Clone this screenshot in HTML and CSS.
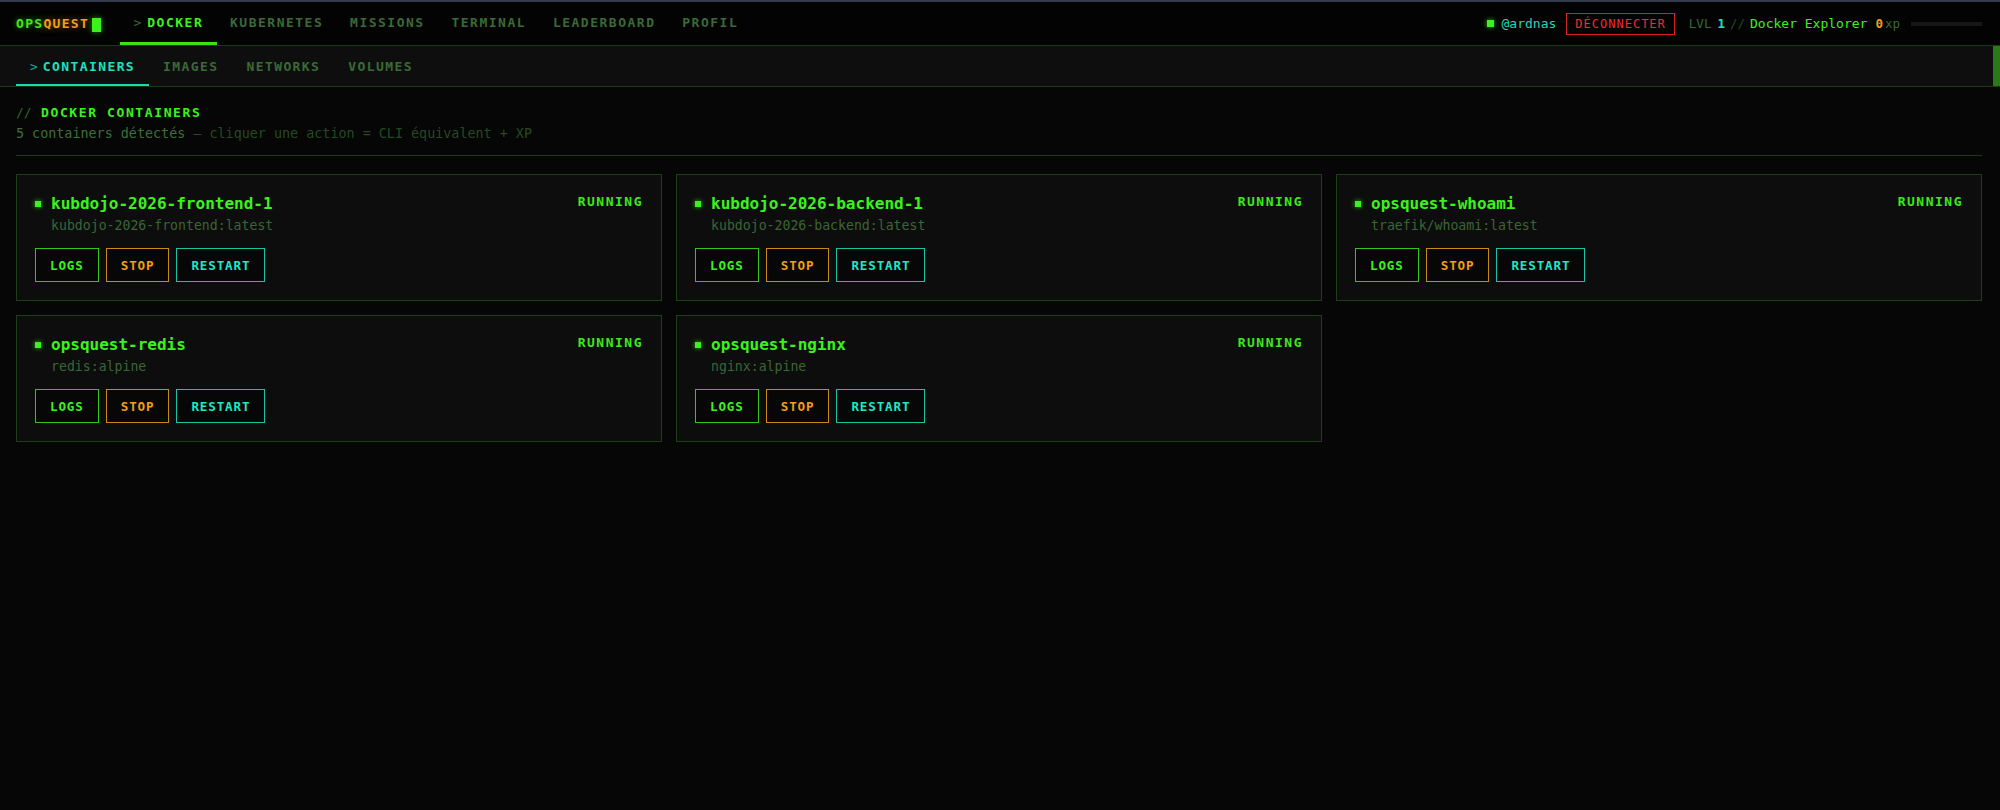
FILE: index.html
```html
<!DOCTYPE html>
<html lang="fr">
<head>
<meta charset="utf-8">
<title>OpsQuest — Docker</title>
<link rel="stylesheet" href="styles.css">
</head>
<body>
<header class="topbar">
  <div class="logo"><span class="ops">OPS</span><span class="quest">QUEST</span><span class="cursor"></span></div>
  <nav class="mainnav">
    <a class="tab active"><span class="chev">&gt;</span>DOCKER</a>
    <a class="tab">KUBERNETES</a>
    <a class="tab">MISSIONS</a>
    <a class="tab">TERMINAL</a>
    <a class="tab">LEADERBOARD</a>
    <a class="tab">PROFIL</a>
  </nav>
  <div class="userbox">
    <span class="online"></span>
    <span class="user">@ardnas</span>
    <button class="logout">DÉCONNECTER</button>
    <span class="lvl">LVL</span><span class="lvlnum">1</span><span class="sep">//</span><span class="rank">Docker Explorer</span><span class="xpnum">0</span><span class="xp">xp</span>
    <span class="xpbar"></span>
  </div>
</header>
<div class="subnav">
  <a class="subtab active"><span class="chev">&gt;</span>CONTAINERS</a>
  <a class="subtab">IMAGES</a>
  <a class="subtab">NETWORKS</a>
  <a class="subtab">VOLUMES</a>
  <span class="thumb"></span>
</div>
<main class="content">
  <section class="head">
    <h1 class="title"><span class="slashes">//</span> DOCKER CONTAINERS</h1>
    <p class="sub"><span class="count">5 containers détectés</span> — cliquer une action = CLI équivalent + XP</p>
  </section>
  <section class="grid">
    <article class="card">
      <div class="card-top"><div class="name"><span class="dot"></span>kubdojo-2026-frontend-1</div><span class="state">RUNNING</span></div>
      <div class="image">kubdojo-2026-frontend:latest</div>
      <div class="actions"><button class="btn logs">LOGS</button><button class="btn stop">STOP</button><button class="btn restart">RESTART</button></div>
    </article>
    <article class="card">
      <div class="card-top"><div class="name"><span class="dot"></span>kubdojo-2026-backend-1</div><span class="state">RUNNING</span></div>
      <div class="image">kubdojo-2026-backend:latest</div>
      <div class="actions"><button class="btn logs">LOGS</button><button class="btn stop">STOP</button><button class="btn restart">RESTART</button></div>
    </article>
    <article class="card">
      <div class="card-top"><div class="name"><span class="dot"></span>opsquest-whoami</div><span class="state">RUNNING</span></div>
      <div class="image">traefik/whoami:latest</div>
      <div class="actions"><button class="btn logs">LOGS</button><button class="btn stop">STOP</button><button class="btn restart">RESTART</button></div>
    </article>
    <article class="card">
      <div class="card-top"><div class="name"><span class="dot"></span>opsquest-redis</div><span class="state">RUNNING</span></div>
      <div class="image">redis:alpine</div>
      <div class="actions"><button class="btn logs">LOGS</button><button class="btn stop">STOP</button><button class="btn restart">RESTART</button></div>
    </article>
    <article class="card">
      <div class="card-top"><div class="name"><span class="dot"></span>opsquest-nginx</div><span class="state">RUNNING</span></div>
      <div class="image">nginx:alpine</div>
      <div class="actions"><button class="btn logs">LOGS</button><button class="btn stop">STOP</button><button class="btn restart">RESTART</button></div>
    </article>
  </section>
</main>
</body>
</html>
```

FILE: styles.css
```css
* { box-sizing: border-box; }
html, body { margin: 0; padding: 0; }
body {
  background: #060606;
  color: #3cf21c;
  font-family: "DejaVu Sans Mono", "Liberation Mono", monospace;
  min-height: 810px;
  border-top: 2px solid #343b4b;
}
a { text-decoration: none; }

.topbar {
  display: flex;
  align-items: stretch;
  height: 44px;
  background: #030303;
  border-bottom: 1px solid #173a14;
  padding: 0 18px 0 16px;
}
.logo {
  display: flex;
  align-items: center;
  font-size: 13px;
  font-weight: bold;
  letter-spacing: 1.3px;
  margin-right: 19px;
}
.logo .ops { color: #44e81c; text-shadow: 0 0 6px rgba(60, 240, 30, 0.6); }
.logo .quest { color: #f0a014; text-shadow: 0 0 6px rgba(240, 160, 20, 0.5); }
.cursor {
  display: inline-block;
  width: 9px;
  height: 14px;
  margin-left: 3px;
  margin-top: 2px;
  background: #3cf21c;
  box-shadow: 0 0 6px rgba(60, 240, 30, 0.6);
}
.mainnav { display: flex; align-items: stretch; }
.tab {
  display: flex;
  align-items: center;
  padding: 1px 13.4px 0 13.4px;
  font-size: 13px;
  font-weight: bold;
  letter-spacing: 1.5px;
  color: #3a6a36;
  border-bottom: 3px solid transparent;
}
.tab.active { color: #3cf21c; border-bottom-color: #3ee014; }
.chev { color: #2e6a26; font-weight: normal; margin-right: 6px; letter-spacing: 0; }

.userbox {
  margin-left: auto;
  display: flex;
  align-items: center;
  font-size: 12.5px;
  color: #3a6a36;
}
.online {
  width: 7px;
  height: 7px;
  background: #3cf21c;
  box-shadow: 0 0 5px rgba(60, 240, 30, 0.8);
  margin-right: 8px;
}
.user { color: #1fd8b8; font-size: 13px; margin-right: 10px; }
.logout {
  font-family: inherit;
  font-size: 12px;
  letter-spacing: 1px;
  color: #f02c2c;
  background: transparent;
  border: 1px solid #d42222;
  height: 22px;
  padding: 0 8px;
  margin-right: 14px;
}
.lvl { color: #3a6a36; margin-right: 6px; }
.lvlnum { color: #1fe0c0; font-weight: bold; margin-right: 5px; }
.sep { color: #244a22; margin-right: 5px; }
.rank { color: #3cf21c; font-size: 13px; margin-right: 8px; }
.xpnum { color: #f0a014; font-weight: bold; margin-right: 2px; }
.xp { color: #3a6a36; margin-right: 11px; }
.xpbar { width: 71px; height: 4px; background: #171717; }

.subnav {
  position: relative;
  display: flex;
  align-items: stretch;
  height: 41px;
  background: #0e0e0e;
  border-bottom: 1px solid #173a14;
  padding-left: 16px;
}
.subtab {
  display: flex;
  align-items: center;
  padding: 2px 14px 0 14px;
  font-size: 13px;
  font-weight: bold;
  letter-spacing: 1.4px;
  color: #3a6a36;
  border-bottom: 2px solid transparent;
}
.subtab.active { color: #1fe0c0; border-bottom-color: #1ed8b0; }
.subtab .chev { color: #1aa88c; margin-right: 5px; }
.thumb {
  position: absolute;
  right: 0;
  top: 0;
  bottom: 0;
  width: 7px;
  background: #2a7a1a;
}

.content { padding: 17px 18px 40px 16px; }
.head { border-bottom: 1px solid #183d16; padding-bottom: 12px; margin-bottom: 18px; }
.title {
  margin: 0;
  font-size: 13px;
  line-height: 18px;
  font-weight: bold;
  letter-spacing: 1.6px;
  color: #3cf21c;
}
.slashes { color: #2a6a24; font-weight: normal; letter-spacing: 0; }
.sub {
  margin: 3px 0 0;
  font-size: 13.4px;
  line-height: 18px;
  color: #254a22;
}
.sub .count { color: #3f6e3a; }

.grid {
  display: grid;
  grid-template-columns: repeat(3, 1fr);
  gap: 14px;
}
.card {
  background: #0d0d0d;
  border: 1px solid #1c3f18;
  padding: 18px;
}
.card-top { display: flex; justify-content: space-between; align-items: flex-start; }
.name {
  display: flex;
  align-items: center;
  font-size: 16px;
  font-weight: bold;
  line-height: 22px;
  color: #3cf21c;
}
.dot {
  width: 6px;
  height: 6px;
  background: #3cf21c;
  box-shadow: 0 0 5px rgba(60, 240, 30, 0.8);
  margin-right: 10px;
}
.state {
  font-size: 13px;
  font-weight: bold;
  line-height: 17px;
  letter-spacing: 1.5px;
  color: #3ce81c;
}
.image {
  margin-top: 2px;
  padding-left: 16px;
  font-size: 13.2px;
  line-height: 18px;
  color: #3a6536;
}
.actions { display: flex; gap: 7px; margin-top: 13px; }
.btn {
  font-family: inherit;
  font-size: 12.5px;
  font-weight: bold;
  letter-spacing: 0.9px;
  height: 34px;
  padding: 0 14px;
  background: #070707;
  border: 1px solid;
}
.btn.logs { color: #3cf21c; border-color: #34c41a; }
.btn.stop { color: #f0a014; border-color: #c88a12; }
.btn.restart { color: #1fe8c4; border-color: #1ac2a6; }
```
